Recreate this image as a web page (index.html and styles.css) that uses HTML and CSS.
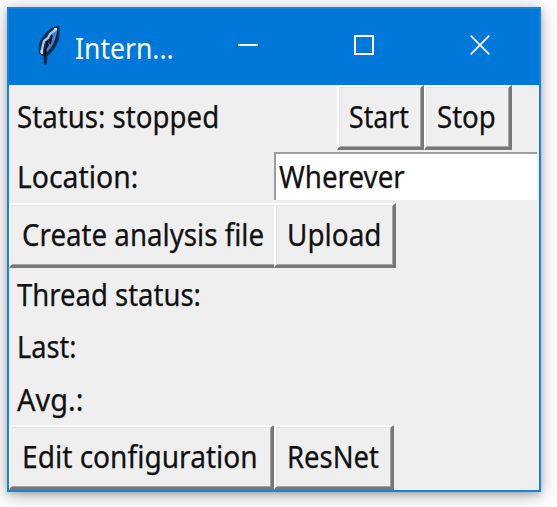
FILE: index.html
```html
<!DOCTYPE html>
<html lang="en">
<head>
<meta charset="utf-8">
<title>Intern...</title>
<link rel="stylesheet" href="styles.css">
</head>
<body>
<main class="window">
  <header class="titlebar">
    <svg class="feather" viewBox="0 0 24 42">
      <path d="M22 1 C14 2 8 8 4 15 C1 21 2 26 3 29 L7 31 L7 39 L9.5 39 L10 31 C16 27 20 20 22 12 Z" fill="#102b49" stroke="#073d70" stroke-width="1"/>
      <path d="M20.5 3 C20 10 17 21 10 27 L9 22 L13 12 Z" fill="#4b80d2"/>
      <path d="M19.5 4 L13 9 L11 13 L7 16 L5.5 22 L4.5 28" fill="none" stroke="#a4caed" stroke-width="2.3"/>
      <path d="M15 10 L14 14 L10 18 L11 20 L8 25 L8 38 M14 15 L13 19" fill="none" stroke="#071421" stroke-width="1.9"/>
      <path d="M17 4 L20 4 M4.5 25 L5 29" stroke="#e6f0f5" stroke-width="2"/>
    </svg>
    <h1 class="caption"><span>Intern...</span></h1>
    <div class="controls">
      <svg viewBox="0 0 20 20"><path d="M0 10H20" stroke-width="2"/></svg>
      <svg viewBox="0 0 20 20"><path d="M1 1H19V19H1Z" stroke-width="2"/></svg>
      <svg viewBox="0 0 20 20"><path d="M.7.7L19.3 19.3M19.3.7L.7 19.3" stroke-width="1.7"/></svg>
    </div>
  </header>
  <section class="form">
    <div class="row tall">
      <div class="label status-label"><span class="fit-status">Status: stopped</span></div>
      <button class="start"><span class="fit-start">Start</span></button>
      <button class="stop"><span class="fit-stop">Stop</span></button>
    </div>
    <div class="row">
      <div class="label"><span class="fit-location">Location:</span></div>
      <div class="entry"><span class="fit-wherever">Wherever</span></div>
    </div>
    <div class="row tall">
      <button class="create"><span class="fit-create">Create analysis file</span></button>
      <button class="upload"><span class="fit-upload">Upload</span></button>
    </div>
    <div class="row"><div class="label"><span class="fit-thread">Thread status:</span></div></div>
    <div class="row"><div class="label"><span class="fit-last">Last:</span></div></div>
    <div class="row"><div class="label"><span class="fit-avg">Avg.:</span></div></div>
    <div class="row tall">
      <button class="edit"><span class="fit-edit">Edit configuration</span></button>
      <button class="resnet"><span class="fit-resnet">ResNet</span></button>
    </div>
  </section>
</main>
</body>
</html>
```
FILE: styles.css
```css
* { box-sizing: border-box; }
body {
  margin: 0;
  padding: 7px;
  height: 507px;
  overflow: hidden;
  background: #fff;
  font-family: "Noto Sans", sans-serif;
}
.window {
  width: 534px;
  height: 485px;
  border: 2px solid #1a83d9;
  background: #efefef;
  box-shadow: 0 3px 17px rgba(0, 0, 0, .32), 0 2px 5px rgba(0, 0, 0, .15);
}
.titlebar {
  display: flex;
  height: 76px;
  background: #0078d9;
}
.feather {
  width: 24px;
  height: 42px;
  margin: 16px 0 0 28px;
}
.caption {
  width: 168px;
  margin: 0;
  padding-left: 13.5px;
  font-size: 29px;
  font-weight: 400;
  line-height: 77px;
  color: #fff;
}
.caption span {
  display: inline-block;
  transform: scaleX(.915);
  transform-origin: 0 50%;
}
.controls {
  display: flex;
  gap: 96px;
  padding: 26px 0 0 8.5px;
}
.controls svg {
  flex: none;
  width: 20px;
  height: 20px;
  fill: none;
  stroke: #fff;
}
.row {
  display: flex;
  height: 52.5px;
  font-size: 30px;
  line-height: 54px;
  color: #111;
}
.row.tall { height: 65px; }
.row span {
  display: inline-block;
  white-space: nowrap;
  font-variant-ligatures: none;
  -webkit-text-stroke: .25px #111;
  transform-origin: 0 50%;
}
.label {
  width: 265px;
  padding-left: 7.5px;
}
.status-label {
  width: 327.5px;
  line-height: 64px;
}
button {
  flex: none;
  height: 65px;
  margin: 0;
  padding: 0 0 0 10.5px;
  border: 2px solid #fff;
  border-right: 3px solid #777;
  border-bottom: 3px solid #777;
  background: #efefef;
  box-shadow: inset 1px 1px #e3e3e3, inset -1px -1px #a5a5a5;
  color: #111;
  font: 30px/58px "Noto Sans", sans-serif;
  text-align: left;
}
.start { width: 87.5px; }
.stop { width: 87.5px; }
.create {
  width: 265px;
  border-right: 0;
  box-shadow: inset 1px 1px #e3e3e3, inset 0 -1px #a5a5a5;
}
.upload { width: 122px; }
.edit { width: 265px; }
.resnet { width: 120px; }
.entry {
  width: 263px;
  height: 48px;
  margin-top: 2px;
  padding-left: 3px;
  border-top: 2px solid #9d9d9d;
  border-left: 2px solid #9d9d9d;
  background: #fff;
  line-height: 46px;
}
.fit-status { transform: scaleX(.922); }
.fit-start { transform: scaleX(.89); }
.fit-stop { transform: scaleX(.92); }
.fit-location { transform: scaleX(.945); }
.fit-wherever { transform: scaleX(.925); }
.fit-create { transform: scaleX(.923); }
.fit-upload { transform: scaleX(.93); }
.fit-thread { transform: scaleX(.916); }
.fit-last { transform: scaleX(.905); }
.fit-avg { transform: scaleX(.965); }
.fit-edit { transform: scaleX(.937); }
.fit-resnet { transform: scaleX(.915); }
```
